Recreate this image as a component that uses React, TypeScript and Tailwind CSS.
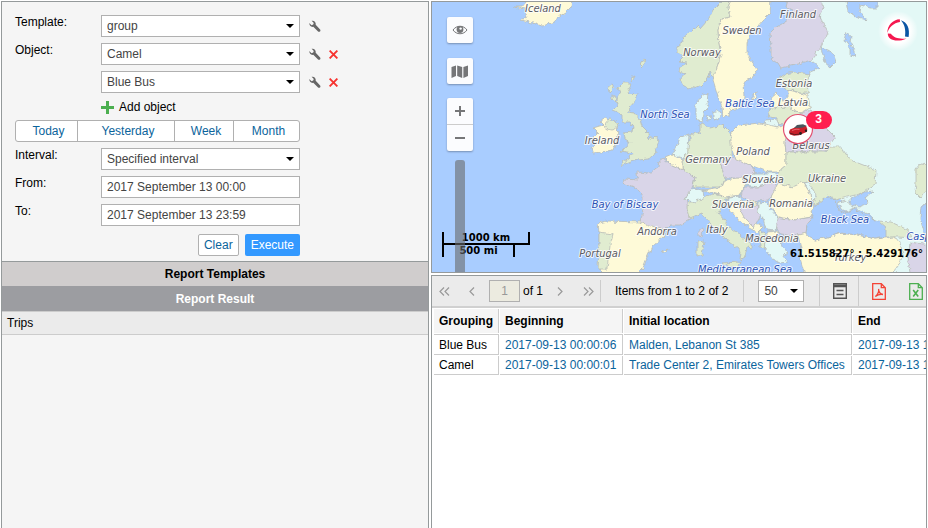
import { useState } from "react";
import type { ReactNode } from "react";

const GREEN = "#e0ecd0";
const YELLOW = "#fefad8";
const PURPLE = "#d9d5e8";
const TEAL = "#e3f8f6";
const SEA = "#a9cdff";

const LANDS = [
  // Russia and the east
  { fill: TEAL, points: "821,0 930,0 930,276 890,276 890,235 870,215 840,200 800,160 800,110 807,83 810,72 820,68 811,60 820,40" },
  { fill: YELLOW, points: "513,7 522,7 525,3 522,0 572,0 571,7 565,13 558,17 555,22 547,24 542,26 533,23 520,20 527,17 525,13 526,9" },
  // British Isles
  { fill: GREEN, points: "623,83 631,83 630,87 627,93 638,94 636,100 630,107 627,112 634,113 640,120 642,127 648,133 649,140 651,137 658,138 659,142 655,148 657,153 648,159 638,160 630,162 623,165 619,167 623,162 630,157 633,153 627,152 620,151 627,147 630,142 625,139 624,133 632,132 633,127 630,122 622,122 622,115 618,112 613,110 618,105 617,100 620,93 618,88" },
  { fill: YELLOW, points: "593,128 603,125 600,122 605,118 611,121 617,124 618,137 613,150 593,153 591,148 597,143 593,138 598,133" },
  { fill: GREEN, points: "610,119 616,121 618,126 613,130 608,129 604,126" },
  { fill: GREEN, points: "608,88 613,84 613,88 609,92" },
  { fill: GREEN, points: "612,95 616,97 615,102 612,99" },
  { fill: GREEN, points: "641,62 645,59 643,68 640,65" },
  { fill: GREEN, points: "630,78 635,76 632,82" },
  // Scandinavia
  { fill: GREEN, points: "723,0 731,0 728,7 730,17 722,19 718,30 719,43 721,55 717,67 715,80 710,72 708,78 700,86 692,89 685,87 680,80 685,74 679,72 680,67 687,63 678,62 684,56 677,53 677,47 683,42 682,37 690,33 698,25 700,29 708,20 713,10 718,5" },
  { fill: YELLOW, points: "731,0 771,0 770,13 763,20 757,27 750,32 747,43 747,55 753,63 757,70 752,78 743,83 744,97 740,108 730,110 729,116 723,117 722,107 717,93 713,80 717,67 721,55 719,43 718,30 722,19 730,17 728,7" },
  { fill: PURPLE, points: "788,0 821,0 823,8 820,17 828,33 821,47 811,60 795,65 781,68 778,63 771,58 771,47 770,33 775,28 785,22 791,18 793,10 786,7" },
  { fill: TEAL, points: "696,103 703,95 708,93 707,103 709,107 703,113 702,122 698,121 696,115" },
  { fill: TEAL, points: "706,116 710,115 711,119 707,120" },
  { fill: TEAL, points: "713,112 719,110 721,115 718,121 713,118" },
  { fill: YELLOW, points: "753,95 757,91 756,97 753,100" },
  // Baltics
  { fill: GREEN, points: "785,74 795,72 810,74 807,83 808,93 800,93 791,90 785,89 781,83 778,79" },
  { fill: YELLOW, points: "788,90 800,93 808,95 810,108 801,113 788,107 770,108 771,97 776,93 783,100 788,98" },
  { fill: GREEN, points: "770,108 788,107 801,113 793,120 791,125 778,123 778,118 768,117" },
  { fill: TEAL, points: "765,121 778,120 778,127 763,126" },
  // Central Europe
  { fill: GREEN, points: "690,135 700,132 700,123 710,128 723,125 730,132 732,148 732,157 720,162 725,178 722,187 693,187 695,177 683,170 683,160 685,152 690,142" },
  { fill: TEAL, points: "680,137 689,134 688,150 683,158 672,155 676,147" },
  { fill: YELLOW, points: "665,158 672,155 683,160 683,170 672,165" },
  { fill: PURPLE, points: "663,158 672,165 683,170 695,177 692,188 686,198 688,210 692,218 680,225 670,225 665,230 640,223 643,210 643,197 637,188 623,183 625,179 638,180 637,172 650,173 658,167 659,161" },
  { fill: TEAL, points: "687,195 693,188 703,190 704,198 695,202 685,200" },
  { fill: GREEN, points: "688,202 695,202 703,198 713,194 728,197 723,205 718,213 730,227 737,233 753,245 753,248 747,247 745,257 740,260 741,252 738,248 723,237 710,223 702,213 690,218 687,208" },
  { fill: GREEN, points: "722,263 741,262 738,268 730,267" },
  { fill: GREEN, points: "697,242 704,241 702,255 697,256" },
  { fill: PURPLE, points: "699,229 703,227 702,237 699,236" },
  { fill: YELLOW, points: "703,190 722,187 725,180 743,177 745,185 740,195 725,197 713,193" },
  { fill: PURPLE, points: "720,162 732,157 753,167 755,173 743,178 725,178" },
  { fill: YELLOW, points: "731,132 738,125 760,123 778,127 788,125 787,137 785,143 786,152 786,165 778,172 768,172 750,165 736,160 731,145" },
  { fill: TEAL, points: "745,177 755,173 775,173 778,182 758,187 745,185" },
  { fill: PURPLE, points: "745,187 758,187 775,182 778,188 768,200 750,202 741,195" },
  // Eastern Europe
  { fill: PURPLE, points: "801,113 811,110 825,127 835,137 830,145 825,151 786,152 785,143 788,125 793,120" },
  { fill: GREEN, points: "786,152 825,152 830,147 841,147 848,157 858,163 876,170 875,185 865,192 855,195 836,200 828,195 818,205 813,205 815,195 806,182 793,187 778,183 778,172 786,165" },
  { fill: TEAL, points: "804,183 809,182 816,195 811,204 810,193" },
  { fill: YELLOW, points: "778,183 793,187 803,182 810,193 811,203 814,207 811,217 795,220 778,217 768,203 773,193" },
  { fill: PURPLE, points: "776,217 795,220 813,217 807,225 806,233 795,236 780,234 775,225" },
  // Balkans
  { fill: TEAL, points: "728,197 741,196 742,201 727,206" },
  { fill: YELLOW, points: "728,206 742,201 750,202 757,202 757,206 738,207 750,223 757,231 745,225 734,215" },
  { fill: PURPLE, points: "738,206 757,205 760,217 754,228 745,219" },
  { fill: TEAL, points: "758,203 766,202 771,210 778,218 776,231 766,230 763,218 758,212" },
  { fill: YELLOW, points: "756,223 763,227 757,233 753,228" },
  { fill: GREEN, points: "759,231 765,233 766,247 760,248" },
  { fill: YELLOW, points: "767,232 777,231 779,237 767,240" },
  { fill: TEAL, points: "766,241 780,237 797,236 795,241 780,243 788,253 783,256 788,262 780,263 772,259 765,250" },
  // Iberia
  { fill: YELLOW, points: "598,223 607,221 640,222 652,226 665,230 664,236 652,247 647,258 643,268 635,276 604,276 599,269 599,232" },
  { fill: GREEN, points: "599,232 613,234 610,245 607,269 598,269 599,248" },
  { fill: YELLOW, points: "663,252 668,249 667,253" },
  // Caucasus and Turkey
  { fill: GREEN, points: "878,221 891,222 908,230 911,238 898,237 886,237" },
  { fill: PURPLE, points: "910,242 930,245 930,276 911,276 908,262" },
  { fill: YELLOW, points: "798,235 806,233 815,240 828,237 841,233 858,235 875,239 895,237 900,243 903,255 898,267 891,276 805,276 800,258 801,248" },
  { fill: GREEN, points: "930,165 921,164 916,170 916,182 915,192 920,197 930,188" },
];

const WATERS = [
  "818,204 826,197 836,200 838,210 845,213 855,209 865,215 878,221 886,228 886,237 875,239 858,235 841,233 828,237 815,240 806,235 807,225 813,217 811,210",
  "873,191 865,198 868,203 858,207 850,203 850,199 858,195 865,192",
  "821,48 828,50 833,53 836,62 831,67 825,62 823,55",
  "846,33 851,37 850,42 853,47 856,55 850,57 850,48 844,40",
  "846,0 878,0 878,8 870,8 861,5 860,12 866,20 855,17 848,12",
  "930,202 921,207 920,218 924,232 930,246",
];

const COUNTRY_LABELS = [
  { name: "Iceland", x: 543, y: 12 },
  { name: "Norway", x: 702, y: 56 },
  { name: "Sweden", x: 742, y: 34 },
  { name: "Finland", x: 798, y: 18 },
  { name: "Estonia", x: 794, y: 87 },
  { name: "Latvia", x: 793, y: 106 },
  { name: "Ireland", x: 602, y: 144 },
  { name: "Belarus", x: 811, y: 149 },
  { name: "Poland", x: 753, y: 155 },
  { name: "Germany", x: 708, y: 163 },
  { name: "Slovakia", x: 763, y: 183 },
  { name: "Ukraine", x: 827, y: 182 },
  { name: "Romania", x: 791, y: 207 },
  { name: "Slovenia", x: 733, y: 208 },
  { name: "Italy", x: 717, y: 233 },
  { name: "Macedonia", x: 772, y: 242 },
  { name: "Andorra", x: 657, y: 235 },
  { name: "Portugal", x: 600, y: 257 },
  { name: "Turkey", x: 850, y: 261 },
];

const SEA_LABELS = [
  { name: "Baltic Sea", x: 750, y: 107 },
  { name: "North Sea", x: 665, y: 118 },
  { name: "Bay of Biscay", x: 625, y: 208 },
  { name: "Black Sea", x: 845, y: 223 },
  { name: "Caspian Sea", x: 937, y: 240 },
  { name: "Mediterranean Sea", x: 745, y: 273 },
];

const TRIPS = [
  { group: "Blue Bus", begin: "2017-09-13 00:00:06", location: "Malden, Lebanon St 385", end: "2017-09-13 12:59:56" },
  { group: "Camel", begin: "2017-09-13 00:00:01", location: "Trade Center 2, Emirates Towers Offices", end: "2017-09-13 12:59:58" },
];

function WrenchIcon() {
  return (
    <svg width="12" height="12" viewBox="0 0 12 12">
      <path d="M2.6.8 4.800 2.900 4.200 4.600 2.500 5.200.300 3.100C.2 5.600 2 7.300 4.300 6.800L8.800 11.300c.7.7 1.600.6 2.200.1.600-.6.600-1.500-.1-2.200L6.700 4.800C7.200 2.300 5.200.200 2.600.8Z" fill="#666" />
    </svg>
  );
}

function CrossIcon() {
  return (
    <svg width="9" height="9" viewBox="0 0 9 9">
      <path d="M.6.6l7.800 7.800M8.400.6.6 8.400" stroke="#f6332f" strokeWidth="1.900" fill="none" />
    </svg>
  );
}

function SelectBox({ id, label, value, options, className }: { id: string; label?: string; value: string; options: string[]; className: string }) {
  const [selected, setSelected] = useState(value);
  return (
    <div className={`relative ${className}`}>
      <select
        id={id}
        aria-label={label}
        value={selected}
        onChange={(e) => setSelected(e.target.value)}
        className="block h-[22px] w-full appearance-none border border-[#b0b0b0] bg-white pr-4 pl-[5px] text-xs text-[#444] outline-none"
      >
        {options.map((o) => (
          <option key={o}>{o}</option>
        ))}
      </select>
      <svg className="pointer-events-none absolute top-[9px] right-[6px]" width="8" height="4" viewBox="0 0 8 4">
        <path d="M0 0h8L4 4z" fill="#000" />
      </svg>
    </div>
  );
}

function FormRow({ id, label, children }: { id: string; label: string; children: ReactNode }) {
  return (
    <div className="flex items-start">
      <label htmlFor={id} className="w-[86px] shrink-0 leading-[14px]">{label}</label>
      <div className="flex items-center">{children}</div>
    </div>
  );
}

function IconButton({ label, className, children }: { label: string; className: string; children: ReactNode }) {
  return (
    <button type="button" aria-label={label} className={`flex shrink-0 items-center justify-center ${className}`}>
      {children}
    </button>
  );
}

function ReportForm() {
  const inputClass = "block h-[22px] w-[199px] border border-[#b0b0b0] bg-white px-[5px] text-xs text-[#444] outline-none";
  const objects = ["Camel", "Blue Bus"];

  return (
    <form onSubmit={(e) => e.preventDefault()} className="flex flex-col gap-[6px] px-[13px] pt-[13px] pb-[5px]">
      <FormRow id="template" label="Template:">
        <SelectBox id="template" value="group" options={["group", "unit"]} className="w-[199px]" />
        <IconButton label="Template settings" className="ml-[9px]"><WrenchIcon /></IconButton>
      </FormRow>
      {objects.map((name, i) => (
        <FormRow key={name} id={`object-${i}`} label={i === 0 ? "Object:" : ""}>
          <SelectBox id={`object-${i}`} label="Object" value={name} options={objects} className="w-[199px]" />
          <IconButton label={`${name} settings`} className="ml-[9px]"><WrenchIcon /></IconButton>
          <IconButton label={`Remove ${name}`} className="ml-2"><CrossIcon /></IconButton>
        </FormRow>
      ))}
      <button type="button" className="ml-[86px] flex h-4 items-center gap-[5px] self-start">
        <svg width="13" height="13" viewBox="0 0 13 13">
          <path d="M5 0h3v5h5v3H8v5H5V8H0V5h5z" fill="#4caf50" />
        </svg>
        Add object
      </button>
      <div className="-mt-px flex h-[22px] w-[285px] divide-x divide-[#b0b0b0] rounded-[3px] border border-[#b0b0b0] bg-white text-[#0b649c]">
        <button type="button" className="w-[62px] pl-1">Today</button>
        <button type="button" className="w-[97px] pl-1">Yesterday</button>
        <button type="button" className="w-[59px] pl-1">Week</button>
        <button type="button" className="flex-1 pl-1">Month</button>
      </div>
      <FormRow id="interval" label="Interval:">
        <SelectBox id="interval" value="Specified interval" options={["Specified interval", "For previous"]} className="w-[199px]" />
      </FormRow>
      <FormRow id="from" label="From:">
        <input id="from" type="text" defaultValue="2017 September 13 00:00" className={inputClass} />
      </FormRow>
      <FormRow id="to" label="To:">
        <input id="to" type="text" defaultValue="2017 September 13 23:59" className={inputClass} />
      </FormRow>
      <div className="mt-[2px] flex w-[285px] justify-end gap-[6px]">
        <button type="reset" className="h-[22px] rounded-[2px] border border-[#b0b0b0] bg-white px-[5px] text-[#0b649c]">Clear</button>
        <button type="submit" className="h-[22px] rounded-[2px] bg-[#3399ff] px-[6px] text-white">Execute</button>
      </div>
    </form>
  );
}

function MapCanvas() {
  return (
    <svg viewBox="432 2 494 270" preserveAspectRatio="xMidYMid slice" className="block h-full w-full">
      <defs>
        <filter id="coast" x="0" y="0" width="100%" height="100%">
          <feTurbulence type="fractalNoise" baseFrequency="0.22" numOctaves="2" seed="4" />
          <feDisplacementMap in="SourceGraphic" scale="5" xChannelSelector="R" yChannelSelector="G" />
        </filter>
        <radialGradient id="glow">
          <stop offset="0.6" stopColor="#fff" />
          <stop offset="1" stopColor="#fff" stopOpacity="0" />
        </radialGradient>
      </defs>
      <g filter="url(#coast)" stroke="#b9bdb8" strokeWidth="0.8" strokeLinejoin="round">
        <rect x="420" y="-10" width="520" height="300" fill={SEA} stroke="none" />
        {LANDS.map((land) => (
          <polygon key={land.points} points={land.points} fill={land.fill} />
        ))}
        {WATERS.map((points) => (
          <polygon key={points} points={points} fill={SEA} />
        ))}
        <polygon points="838,203 845,200 851,205 855,208 845,212 841,209" fill={TEAL} />
      </g>
      <g
        className="font-['DejaVu_Sans_Condensed','DejaVu_Sans',sans-serif] text-[11px] italic"
        textAnchor="middle"
        paintOrder="stroke"
        stroke="#fff"
        strokeOpacity="0.8"
        strokeWidth="2"
        strokeLinejoin="round"
      >
        {COUNTRY_LABELS.map((l) => (
          <text key={l.name} x={l.x} y={l.y} fill="#5b5b62">{l.name}</text>
        ))}
        {SEA_LABELS.map((l) => (
          <text key={l.name} x={l.x} y={l.y} fill="#2a50b4">{l.name}</text>
        ))}
      </g>

      {/* Provider logo */}
      <circle cx="898" cy="31" r="20" fill="url(#glow)" />
      <path d="M899.800 19.200C893 19.500 887.300 25 887.300 33 889 27.500 893.500 23 900 22Z" fill="#f5174f" />
      <path d="M900.800 20.300C907.500 22 910 29 908.600 37L905 36.600C906 30 904.500 24 900.800 20.300Z" fill="#0b56a4" />
      <path d="M887.800 33.500C887.500 40 897 43 906.500 38.400 899.500 39.500 893.500 37.800 891 33.800Z" fill="#f5174f" />

      {/* Unit marker */}
      <circle cx="798" cy="129" r="14.500" fill="#fff" stroke="#e25272" strokeWidth="1.200" />
      <path d="M789 132l1-2.500 6-2.500 5-.8 5-.4 1.300 3.200-.8 3-7.500 3.300-5 .5-4-1.400Z" fill="#c8202a" />
      <path d="M794 128l3-3 6-.8 3.800 1.900-4.800 1.700Z" fill="#4b555c" />
      <path d="M789.500 133l5 1.600 4.500-.4" stroke="#4c1a1c" strokeWidth="0.900" fill="none" />
      <path d="M792 130.500l4-1.300 3.500.2" stroke="#ee7a80" strokeWidth="0.800" fill="none" />
      <circle cx="800.500" cy="133.500" r="1.400" fill="#222" />
      <circle cx="806" cy="130.800" r="1.200" fill="#222" />
      <rect x="806" y="111" width="26" height="18" rx="9" fill="#ff1f4f" />
      <text x="818.500" y="123" textAnchor="middle" fill="#fff" className="font-['Liberation_Sans',Arial,sans-serif] text-xs font-bold">3</text>
    </svg>
  );
}

function MapPanel() {
  const mapButton = "h-[26px] w-[26px] rounded-[2px] bg-[#fbfcfe] shadow-[0_1px_2px_rgba(0,0,0,0.3)]";
  return (
    <section className="relative h-[272px] overflow-hidden border border-[#959a9b]">
      <MapCanvas />

      <div className="absolute bottom-[15px] left-[10px] font-['DejaVu_Sans',sans-serif] text-[10px] leading-[12px] font-bold text-black">
        <div className="h-[13px] w-[88px] border-x-2 border-b-2 border-black text-center">1000 km</div>
        <div className="h-[12px] w-[73px] border-x-2 border-black text-center">500 mi</div>
      </div>

      <div className="absolute top-[15px] left-[15px] flex flex-col items-center">
        <IconButton label="Visible layers" className={mapButton}>
          <svg width="16" height="12" viewBox="0 0 16 12">
            <path d="M1 6c3.500-5 10.500-5 14 0-3.500 5-10.500 5-14 0Z" fill="none" stroke="#757678" />
            <circle cx="8" cy="5.500" r="3.400" fill="#757678" />
            <circle cx="8.600" cy="4.600" r="1.200" fill="#fbfcfe" />
          </svg>
        </IconButton>
        <IconButton label="Map source" className={`mt-[15px] ${mapButton}`}>
          <svg width="18" height="13" viewBox="0 0 18 13">
            <path d="M.5 2 5 .5v10.500L.5 13zM6.200.5l5 1.500v11l-5-2zM12.400 2 17 .5v10.500l-4.600 2z" fill="#757678" />
          </svg>
        </IconButton>
        <div className="mt-[14px] flex flex-col divide-y divide-[#ccc] rounded-[2px] bg-[#fbfcfe] shadow-[0_1px_2px_rgba(0,0,0,0.3)]">
          <IconButton label="Zoom in" className="h-[27px] w-[26px]">
            <svg width="10" height="10" viewBox="0 0 10 10"><path d="M0 5h10M5 0v10" stroke="#757678" strokeWidth="2" /></svg>
          </IconButton>
          <IconButton label="Zoom out" className="h-[26px] w-[26px]">
            <svg width="10" height="10" viewBox="0 0 10 10"><path d="M0 5h10" stroke="#757678" strokeWidth="2" /></svg>
          </IconButton>
        </div>
        <input
          type="range"
          aria-label="Zoom level"
          className="mt-[9px] h-[120px] w-[10px] appearance-none rounded-[3px] bg-[#6b6b6b]/60 [writing-mode:vertical-lr] [&::-webkit-slider-thumb]:appearance-none [&::-webkit-slider-thumb]:opacity-0"
        />
      </div>

      <output className="absolute right-[3px] bottom-[10px] font-['DejaVu_Sans',sans-serif] text-[10px] leading-4 font-bold text-black">
        61.515827° : 5.429176°
      </output>
    </section>
  );
}

function Chevron({ double = false, flip = false }: { double?: boolean; flip?: boolean }) {
  return (
    <svg width={double ? 11 : 6} height="9" viewBox={double ? "0 0 11 9" : "0 0 6 9"} className={flip ? "-scale-x-100" : ""}>
      <path d={double ? "M5 .5l-4 4 4 4M10 .5l-4 4 4 4" : "M5 .5l-4 4 4 4"} fill="none" stroke="#999" strokeWidth="1.200" />
    </svg>
  );
}

function Toolbar() {
  return (
    <div className="flex h-8 items-center overflow-hidden border-b-2 border-[#d0d0d0] bg-[#ebebeb]">
      <IconButton label="First page" className="ml-[7px] w-[11px]"><Chevron double /></IconButton>
      <IconButton label="Previous page" className="ml-[18px] w-[8px]"><Chevron /></IconButton>
      <input
        type="text"
        aria-label="Page"
        defaultValue="1"
        className="ml-[13px] h-[22px] w-[31px] shrink-0 border border-[#b0b0b0] bg-[#ecebe0] text-center text-xs text-[#999] outline-none"
      />
      <span className="ml-[3px] shrink-0">of 1</span>
      <IconButton label="Next page" className="ml-[13px] w-[8px]"><Chevron flip /></IconButton>
      <IconButton label="Last page" className="ml-[19px] w-[11px]"><Chevron double flip /></IconButton>
      <span className="ml-[6px] h-[22px] w-px shrink-0 bg-[#ccc]" />
      <span className="ml-[14px] shrink-0">Items from 1 to 2 of 2</span>
      <span className="ml-[15px] h-[22px] w-px shrink-0 bg-[#ccc]" />
      <SelectBox id="page-size" label="Items per page" value="50" options={["25", "50", "100"]} className="ml-[14px] w-[46px] shrink-0" />
      <IconButton label="Report templates" className="ml-[15px] h-full w-[39px] border-l border-[#ccc] pl-[2px]">
        <svg width="14" height="16" viewBox="0 0 14 16" fill="none" stroke="#555">
          <path d="M.7.7h12.600v14.600H.7zM0 3.500h14M3.500 7.500h7M3.500 11.500h7" strokeWidth="1.400" />
          <path d="M1 2.500h12" strokeWidth="2" />
        </svg>
      </IconButton>
      <IconButton label="Export to PDF" className="h-full w-[39px] border-l border-[#ccc] pl-[2px]">
        <svg width="14" height="17" viewBox="0 0 14 17" fill="none" stroke="#f44336" strokeWidth="1.300">
          <path d="M.7.7h8.600l4 4v11.600H.7zM9.300.7v4h4" />
          <path d="M3.300 13.500c2-1.200 4-5 3.300-7.500 0 3 1.800 5 4.400 5.500-2.400-.5-5.600.4-7.700 2Z" />
        </svg>
      </IconButton>
      <IconButton label="Export to Excel" className="h-full w-[38px]">
        <svg width="14" height="17" viewBox="0 0 14 17" fill="none" stroke="#4caf50" strokeWidth="1.300">
          <path d="M.7.7h8.600l4 4v11.600H.7zM9.300.7v4h4" />
          <path d="M4.200 7l5 6.500M9.200 7l-5 6.500" strokeWidth="1.600" />
        </svg>
      </IconButton>
    </div>
  );
}

function TripsTable() {
  const head = "h-6 border-r border-[#ccc] bg-[#f5f5f5] pl-[5px] text-left font-bold";
  const cell = "border-r border-b border-[#ccc] pt-px pl-[5px] leading-[17px]";
  return (
    <div className="overflow-hidden pl-px">
      <table className="w-[617px] table-fixed border-separate border-spacing-px whitespace-nowrap">
        <colgroup>
          <col className="w-[65px]" />
          <col className="w-[123px]" />
          <col className="w-[228px]" />
          <col />
        </colgroup>
        <thead>
          <tr>
            <th className={head}>Grouping</th>
            <th className={head}>Beginning</th>
            <th className={head}>Initial location</th>
            <th className={head}>End</th>
          </tr>
        </thead>
        <tbody className="[&>tr:first-child>td]:border-t [&>tr:first-child>td]:pt-[2px]">
          {TRIPS.map((trip) => (
            <tr key={trip.group}>
              <td className={cell}>{trip.group}</td>
              <td className={cell}><a href="#begin" className="text-[#0b649c]">{trip.begin}</a></td>
              <td className={cell}><a href="#location" className="text-[#0b649c]">{trip.location}</a></td>
              <td className={cell}><a href="#end" className="text-[#0b649c]">{trip.end}</a></td>
            </tr>
          ))}
        </tbody>
      </table>
    </div>
  );
}

export default function App() {
  return (
    <div className="flex h-screen gap-[2px] overflow-hidden bg-white pt-px pr-px pl-px font-['Liberation_Sans',Arial,sans-serif] text-xs text-black">
      <aside className="flex w-[428px] shrink-0 flex-col border-x border-t border-[#959a9b] bg-[#f5f5f5]">
        <ReportForm />
        <h2 className="flex h-[25px] items-center justify-center border-t border-[#959a9b] bg-[#d0cdcd] font-bold">Report Templates</h2>
        <h2 className="flex h-[25px] items-center justify-center bg-[#9c9da1] font-bold text-white">Report Result</h2>
        <button type="button" className="h-6 border-y border-[#ccc] bg-[#ebebeb] pl-[5px] text-left">Trips</button>
      </aside>
      <main className="flex min-w-0 flex-1 flex-col gap-[2px]">
        <MapPanel />
        <section className="min-h-0 flex-1 border-x border-t border-[#959a9b] bg-white">
          <Toolbar />
          <TripsTable />
        </section>
      </main>
    </div>
  );
}
